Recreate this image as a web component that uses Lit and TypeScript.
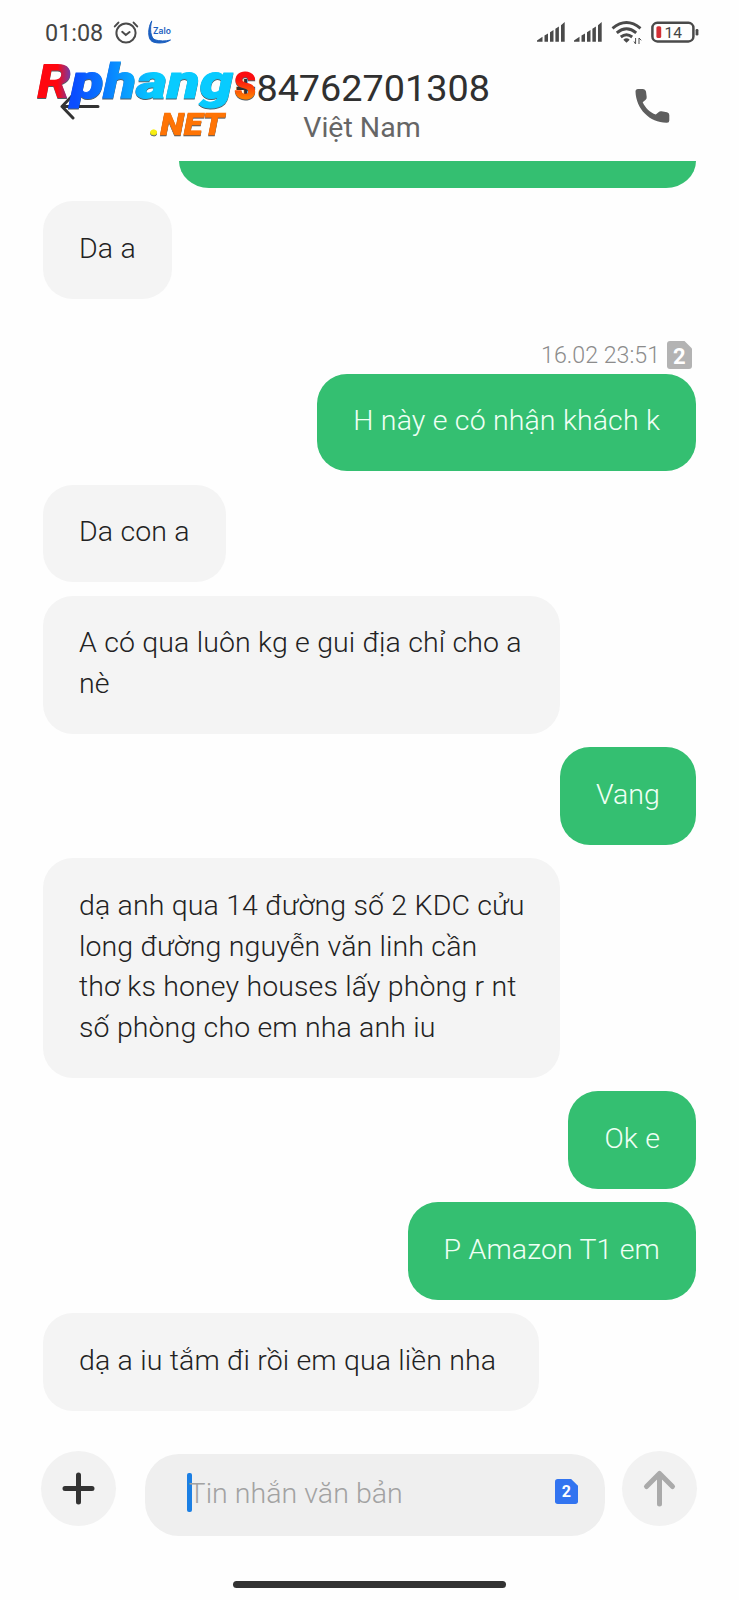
import { LitElement, html, css, svg } from "lit";
import { customElement, property } from "lit/decorators.js";

interface Message {
  text: string;
  mine?: boolean;
  stamp?: string;
}

const messages: Message[] = [
  { text: "Da a" },
  { text: "H này e có nhận khách k", mine: true, stamp: "16.02 23:51" },
  { text: "Da con a" },
  { text: "A có qua luôn kg e gui địa chỉ cho a\nnè" },
  { text: "Vang", mine: true },
  { text: "dạ anh qua 14 đường số 2 KDC cửu\nlong đường nguyễn văn linh cần\nthơ ks honey houses lấy phòng r nt\nsố phòng cho em nha anh iu" },
  { text: "Ok e", mine: true },
  { text: "P Amazon T1 em", mine: true },
  { text: "dạ a iu tắm đi rồi em qua liền nha\u00a0" },
];

@customElement("sim-badge")
class SimBadge extends LitElement {
  @property() tone = "grey";
  static styles = css`
    :host { display: block; }
    svg { display: block; font-family: Roboto, sans-serif; font-weight: 700; }
    .grey { width: 25px; height: 28px; fill: #b3b3b3; }
    .blue { width: 23px; height: 25px; fill: #3274f0; }
    text { fill: #fff; }
  `;
  render() {
    return html`<svg class=${this.tone} viewBox="0 0 25 28" preserveAspectRatio="none">
      <path d="M3 0H17.5L25 7.5V25a3 3 0 0 1-3 3H3a3 3 0 0 1-3-3V3a3 3 0 0 1 3-3Z" />
      <text x="12.3" y=${this.tone === "grey" ? 22.5 : 20.3} text-anchor="middle" font-size=${this.tone === "grey" ? 22 : 17.5}>2</text>
    </svg>`;
  }
}

@customElement("status-bar")
class StatusBar extends LitElement {
  static styles = css`
    :host { display: flex; align-items: center; height: 64px; padding: 0 40px 0 45px; box-sizing: border-box; }
    .time { font-size: 23.4px; color: #444; width: 67px; padding-top: 1px; }
    svg { display: block; flex: none; }
    .left { flex: 1; display: flex; align-items: center; }
    .zalo { font: 600 8.5px Inter, sans-serif; fill: #1b5fc0; }
    .pct { font: 400 15.5px Roboto, sans-serif; fill: #444; }
  `;
  private bars(x: number) {
    return svg`<g transform="translate(${x} 0)">
      <path d="M0 31.8V30.5L5.5 26.8V31.8Z" />
      <path d="M7.5 25.5L11 23.5V31.8H7.5ZM13 22.3L16.5 20V31.8H13ZM18.4 18.8L21.9 16.4V31.8H18.4ZM24 15.2L27.7 12V31.8H24Z" />
    </g>`;
  }
  render() {
    return html`
      <div class="left">
        <span class="time">01:08</span>
        <svg width="64" height="44" viewBox="0 0 64 44" fill="none" stroke="#4a4a4a" stroke-width="2" stroke-linecap="round">
          <circle cx="14" cy="23" r="9.6" />
          <path d="M10.2 21.8L13.8 25L17.6 22M2.8 16.4L6.4 12.6M25.2 16.4L21.6 12.6" />
          <path d="M39.6 11.3C35.8 17 35.5 29 40 31.4C45 34 54 33.3 58.5 30C54 31.3 47 31.3 43 29.8C38.4 28 37.6 18.5 39.6 11.3Z" fill="#1b5fc0" stroke="#1b5fc0" stroke-width="1" />
          <text class="zalo" stroke="none" x="41" y="23.5" textLength="18">Zalo</text>
        </svg>
      </div>
      <svg width="164" height="44" viewBox="0 0 164 44" fill="#4a4a4a">
        ${this.bars(2)}${this.bars(39)}
        <g fill="none" stroke="#4a4a4a" stroke-width="2.9">
          <path d="M77.5 18.3Q91.5 6.8 105.5 18.3" /><path d="M81.8 22.8Q91.5 14.8 101.2 22.8" /><path d="M85.8 27Q91.5 22.5 97.2 27" />
        </g>
        <path d="M88.3 29.7Q91.5 27 94.7 29.7L91.5 32.8Z" />
        <path d="M100.6 28V33.6M99 31.5L100.6 34M104 34V28L106.2 30.3" fill="none" stroke="#4a4a4a" />
        <rect x="117.4" y="12.8" width="41" height="18.6" rx="5" fill="none" stroke="#4a4a4a" stroke-width="2.5" />
        <rect x="121.4" y="16.2" width="4.8" height="11.8" rx="1.6" fill="#d32f35" />
        <rect x="160.6" y="19" width="2.8" height="6.4" rx="1.2" />
        <text class="pct" x="129.5" y="27.7" textLength="17.5">14</text>
      </svg>`;
  }
}

@customElement("brand-mark")
class BrandMark extends LitElement {
  static styles = css`
    :host { display: block; }
    svg { display: block; overflow: visible; font-family: Roboto, sans-serif; font-weight: 900; }
    text { filter: drop-shadow(0.8px 1.5px 0.3px #26343ecc); stroke-width: 1; }
    .initial { font-size: 48px; font-style: italic; fill: url(#red); }
    .name { font-size: 48px; font-style: italic; fill: url(#sky); stroke: url(#sky); }
    .tail { font-size: 52px; fill: url(#fire); }
    .net { font-size: 32px; font-style: italic; fill: #ff7405; stroke: #ff7405; stroke-width: 0.6; }
    .dot { fill: #f7ee12; stroke: #f7ee12; }
  `;
  render() {
    return html`<svg width="230" height="90" viewBox="0 0 230 90">
      <defs>
        <linearGradient id="red"><stop offset=".6" stop-color="#ff0710" /><stop offset="1" stop-color="#6a3fb0" /></linearGradient>
        <linearGradient id="sky" gradientUnits="userSpaceOnUse" x1="45" y1="0" x2="125" y2="0"><stop offset="0" stop-color="#0a4dff" /><stop offset="1" stop-color="#08cbff" /></linearGradient>
        <linearGradient id="fire" x2="0" y2="1"><stop offset=".45" stop-color="#fb0d10" /><stop offset=".75" stop-color="#ff7a00" /></linearGradient>
      </defs>
      <text class="initial" x="7" y="41.8" textLength="34" lengthAdjust="spacingAndGlyphs">R</text>
      <text class="name" x="41" y="41.8" textLength="162" lengthAdjust="spacingAndGlyphs">phang</text>
      <text class="tail" x="204" y="43.4" textLength="22.5" lengthAdjust="spacingAndGlyphs">s</text>
      <text class="net" x="120" y="78.5" textLength="74" lengthAdjust="spacingAndGlyphs"><tspan class="dot">.</tspan>NET</text>
    </svg>`;
  }
}

@customElement("app-root")
class AppRoot extends LitElement {
  static styles = css`
    :host { display: flex; flex-direction: column; width: 739px; height: 1600px; overflow: hidden; background: #fefefe; font-family: Roboto, sans-serif; }
    header { height: 96.5px; flex: none; display: grid; grid-template-columns: 232px 262px 1fr; position: relative; }
    .back { display: block; margin: 29px 0 0 59px; }
    .who { text-align: center; padding-top: 1px; }
    .number { font-size: 37.8px; line-height: 46px; color: #303030; white-space: nowrap; margin-left: -1px; }
    .country { font-size: 28.5px; line-height: 34px; color: #666; margin: 0 0 0 -2px; }
    .call { display: block; margin: 23px 0 0 140px; }
    brand-mark { position: absolute; left: 30px; top: -8px; }
    main { flex: none; height: 1250px; display: flex; flex-direction: column; align-items: flex-start; gap: 13.3px; padding: 0 43px; }
    .cut { flex: none; align-self: flex-end; width: 517px; height: 27.3px; background: #34bf71; border-radius: 0 0 30px 30px / 0 0 27px 27px; }
    .bubble { flex: none; box-sizing: border-box; padding: 27.8px 36px 29.2px; border-radius: 30px; background: #f4f4f4; color: #222; font-size: 28.5px; line-height: 40.7px; font-weight: 340; letter-spacing: 0.1px; word-spacing: 0.22px; white-space: pre; }
    .long { width: 517px; }
    .mine { align-self: flex-end; background: #34bf71; color: #effff5; }
    .stamp { flex: none; align-self: flex-end; display: flex; align-items: center; gap: 7px; margin: 28.7px 4px -8.5px 0; height: 28px; color: #8c8c8c; font-size: 23.2px; font-weight: 300; }
    footer { display: flex; align-items: flex-start; padding: 40.5px 41px 0; }
    .round { width: 75px; height: 75px; border-radius: 50%; background: #f2f2f2; flex: none; }
    .round svg { display: block; }
    .field { flex: none; box-sizing: border-box; width: 460px; height: 82px; margin: 3px 17px 0 29px; border-radius: 34px; background: #efefef; display: flex; align-items: center; padding: 0 27px 0 42px; }
    .caret { flex: none; width: 4.6px; height: 39px; border-radius: 2px; background: #1b7fe4; margin-top: -6px; }
    .hint { flex: 1; font-size: 28.5px; font-weight: 300; color: #a2a2a2; margin: -4px 0 0 -3px; letter-spacing: 0.05px; }
    .field sim-badge { margin-top: -7px; }
    .home { width: 273px; height: 7px; border-radius: 4px; background: #333; margin: 45.4px 0 0 232.5px; }
  `;
  render() {
    return html`
      <status-bar></status-bar>
      <header>
        <svg class="back" width="42" height="28" viewBox="0 0 42 28" fill="none" stroke="#333" stroke-width="3" stroke-linecap="round" stroke-linejoin="round"><path d="M39 13.5H3M14 2L3 13.5L14 25" /></svg>
        <div class="who"><div class="number">+84762701308</div><div class="country">Việt Nam</div></div>
        <svg class="call" width="38" height="38" viewBox="0 0 38 38" fill="#5e5e5e"><path d="M4 2H9Q11.5 2 12 4.5L12.7 10Q12.9 12 11.4 13L8.7 15.3C11 20.5 16 25.8 21.8 27.6L24.5 25.2Q25.8 24 27.5 24.3L33 25.2Q35.3 25.6 35.3 28V33.5Q35.3 35.7 33 35.7C16 36 2 22 1.5 4.5Q1.5 2 4 2Z" /></svg>
        <brand-mark></brand-mark>
      </header>
      <main>
        <div class="cut"></div>
        ${messages.map((m) => html`
          ${m.stamp ? html`<div class="stamp"><span>${m.stamp}</span><sim-badge></sim-badge></div>` : ""}
          <div class="bubble ${m.mine ? "mine" : ""} ${m.text.length > 36 ? "long" : ""}">${m.text}</div>`)}
      </main>
      <footer>
        <div class="round"><svg width="75" height="75" fill="none" stroke="#333" stroke-width="5" stroke-linecap="round"><path d="M24 37.5H51M37.5 24V51" /></svg></div>
        <div class="field"><span class="caret"></span><span class="hint">Tin nhắn văn bản</span><sim-badge tone="blue"></sim-badge></div>
        <div class="round"><svg width="75" height="75" fill="none" stroke="#aaa" stroke-width="5" stroke-linecap="round" stroke-linejoin="round"><path d="M24.5 35.5L37.5 22.5L50.5 35.5M37.5 22.5V53" /></svg></div>
      </footer>
      <div class="home"></div>`;
  }
}
